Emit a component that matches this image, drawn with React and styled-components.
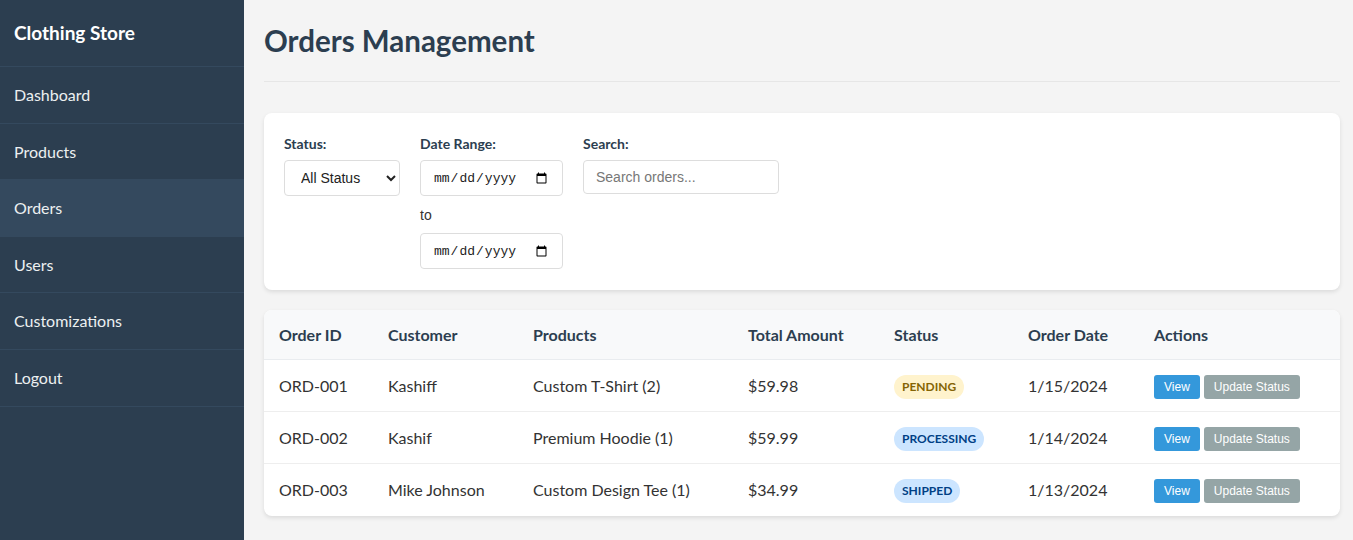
import React from 'react';
import styled, { createGlobalStyle } from 'styled-components';

const GlobalStyle = createGlobalStyle`
  * { box-sizing: border-box; }
  body {
    margin: 0;
    font-family: Lato, "Segoe UI", "Open Sans", sans-serif;
    background: #f4f4f4;
    color: #333;
  }
`;

const Layout = styled.div`
  display: flex;
  min-height: 100vh;
`;

const Sidebar = styled.aside`
  width: 244px;
  flex-shrink: 0;
  background: #2c3e50;
  color: #ecf0f1;
`;

const Brand = styled.h2`
  margin: 0;
  padding: 20px 14px;
  font-size: 19px;
  line-height: 26px;
  font-weight: 700;
  color: #fff;
  border-bottom: 1px solid #34495e;
`;

const NavList = styled.nav`
  display: flex;
  flex-direction: column;
`;

const NavItem = styled.a`
  display: block;
  padding: 16px 14px;
  font-size: 16px;
  line-height: 23.6px;
  color: #ecf0f1;
  text-decoration: none;
  border-bottom: 1px solid #34495e;
  background: ${(p) => (p.$active ? '#34495e' : 'transparent')};
`;

const Main = styled.main`
  flex: 1;
  padding: 23px 13px 20px 20px;
`;

const PageHeader = styled.header`
  padding-bottom: 23px;
  border-bottom: 1px solid #e6e6e6;
  margin-bottom: 31px;
`;

const Title = styled.h1`
  margin: 0;
  font-size: 29.5px;
  line-height: 35px;
  font-weight: 700;
  color: #2c3e50;
`;

const Card = styled.section`
  background: #fff;
  border-radius: 8px;
  box-shadow: 0 2px 4px rgba(0, 0, 0, 0.1);
  margin-bottom: 20px;
  overflow: hidden;
`;

const Filters = styled(Card)`
  display: flex;
  align-items: flex-start;
  gap: 20px;
  padding: 22px 20px 21px;
`;

const FilterGroup = styled.div`
  display: flex;
  flex-direction: column;
  align-items: flex-start;
`;

const Label = styled.label`
  font-size: 14px;
  line-height: 18px;
  font-weight: 700;
  color: #2c3e50;
  margin-bottom: 7px;
`;

const controlBase = `
  border: 1px solid #ddd;
  border-radius: 4px;
  background: #fff;
  font-size: 14px;
  color: #222;
`;

const Select = styled.select`
  ${controlBase}
  width: 116px;
  height: 36px;
  padding: 0 8px 0 12px;
  font-family: "Liberation Sans", Arial, sans-serif;
`;

const DateInput = styled.input`
  ${controlBase}
  width: 143px;
  height: 36px;
  padding: 0 12px;
  font-family: "Liberation Mono", monospace;
  font-size: 13px;
`;

const RangeSep = styled.span`
  display: block;
  margin: 9px 0 7px;
  font-family: "Liberation Sans", Arial, sans-serif;
  font-size: 14px;
  line-height: 21px;
  color: #333;
`;

const SearchInput = styled.input`
  ${controlBase}
  width: 196px;
  height: 34px;
  padding: 0 12px;
  font-family: "Liberation Sans", Arial, sans-serif;
  &::placeholder { color: #777; }
`;

const Table = styled.table`
  width: 100%;
  border-collapse: collapse;
  table-layout: fixed;
`;

const Th = styled.th`
  text-align: left;
  padding: 12px 15px;
  font-size: 16px;
  line-height: 25px;
  font-weight: 700;
  color: #2c3e50;
  background: #f8f9fa;
  border-bottom: 1px solid #e9ecef;
`;

const Td = styled.td`
  height: 52px;
  padding: 0 15px;
  font-size: 16px;
  line-height: 24px;
  color: #333;
  vertical-align: middle;
  border-bottom: ${(p) => (p.$last ? 'none' : '1px solid #eee')};
  white-space: nowrap;
`;

const badgeColors = {
  pending: { bg: '#fff3cd', fg: '#856404' },
  processing: { bg: '#cce5ff', fg: '#004085' },
  shipped: { bg: '#cce5ff', fg: '#004085' },
};

const Badge = styled.span`
  display: inline-flex;
  align-items: center;
  height: 24px;
  margin-top: 3px;
  padding: 0 8px;
  border-radius: 12px;
  font-size: 12px;
  line-height: 16px;
  font-weight: 700;
  text-transform: uppercase;
  vertical-align: top;
  background: ${(p) => badgeColors[p.$status].bg};
  color: ${(p) => badgeColors[p.$status].fg};
`;

const Actions = styled.div`
  display: flex;
  gap: 4px;
  padding-top: 2px;
`;

const Button = styled.button`
  border: none;
  border-radius: 3px;
  padding: 5px 10px;
  font-family: "Liberation Sans", Arial, sans-serif;
  font-size: 12px;
  line-height: 14px;
  color: #fff;
  cursor: pointer;
  background: ${(p) => (p.$variant === 'secondary' ? '#95a5a6' : '#3498db')};
`;

const nav = ['Dashboard', 'Products', 'Orders', 'Users', 'Customizations', 'Logout'];

const orders = [
  { id: 'ORD-001', customer: 'Kashiff', products: 'Custom T-Shirt (2)', total: '$59.98', status: 'pending', date: '1/15/2024' },
  { id: 'ORD-002', customer: 'Kashif', products: 'Premium Hoodie (1)', total: '$59.99', status: 'processing', date: '1/14/2024' },
  { id: 'ORD-003', customer: 'Mike Johnson', products: 'Custom Design Tee (1)', total: '$34.99', status: 'shipped', date: '1/13/2024' },
];

const columns = [
  ['Order ID', 109],
  ['Customer', 145],
  ['Products', 215],
  ['Total Amount', 146],
  ['Status', 134],
  ['Order Date', 126],
  ['Actions', 201],
];

export default function App() {
  return (
    <>
      <GlobalStyle />
      <Layout>
        <Sidebar>
          <Brand>Clothing Store</Brand>
          <NavList>
            {nav.map((item) => (
              <NavItem key={item} href="#" $active={item === 'Orders'}>
                {item}
              </NavItem>
            ))}
          </NavList>
        </Sidebar>

        <Main>
          <PageHeader>
            <Title>Orders Management</Title>
          </PageHeader>

          <Filters>
            <FilterGroup>
              <Label>Status:</Label>
              <Select defaultValue="all">
                <option value="all">All Status</option>
                <option value="pending">Pending</option>
                <option value="processing">Processing</option>
                <option value="shipped">Shipped</option>
              </Select>
            </FilterGroup>
            <FilterGroup>
              <Label>Date Range:</Label>
              <DateInput type="date" />
              <RangeSep>to</RangeSep>
              <DateInput type="date" />
            </FilterGroup>
            <FilterGroup>
              <Label>Search:</Label>
              <SearchInput type="text" placeholder="Search orders..." />
            </FilterGroup>
          </Filters>

          <Card>
            <Table>
              <colgroup>
                {columns.map(([name, w]) => (
                  <col key={name} style={{ width: w }} />
                ))}
              </colgroup>
              <thead>
                <tr>
                  {columns.map(([name]) => (
                    <Th key={name}>{name}</Th>
                  ))}
                </tr>
              </thead>
              <tbody>
                {orders.map((o, i) => {
                  const last = i === orders.length - 1;
                  return (
                    <tr key={o.id}>
                      <Td $last={last}>{o.id}</Td>
                      <Td $last={last}>{o.customer}</Td>
                      <Td $last={last}>{o.products}</Td>
                      <Td $last={last}>{o.total}</Td>
                      <Td $last={last}>
                        <Badge $status={o.status}>{o.status}</Badge>
                      </Td>
                      <Td $last={last}>{o.date}</Td>
                      <Td $last={last}>
                        <Actions>
                          <Button>View</Button>
                          <Button $variant="secondary">Update Status</Button>
                        </Actions>
                      </Td>
                    </tr>
                  );
                })}
              </tbody>
            </Table>
          </Card>
        </Main>
      </Layout>
    </>
  );
}
